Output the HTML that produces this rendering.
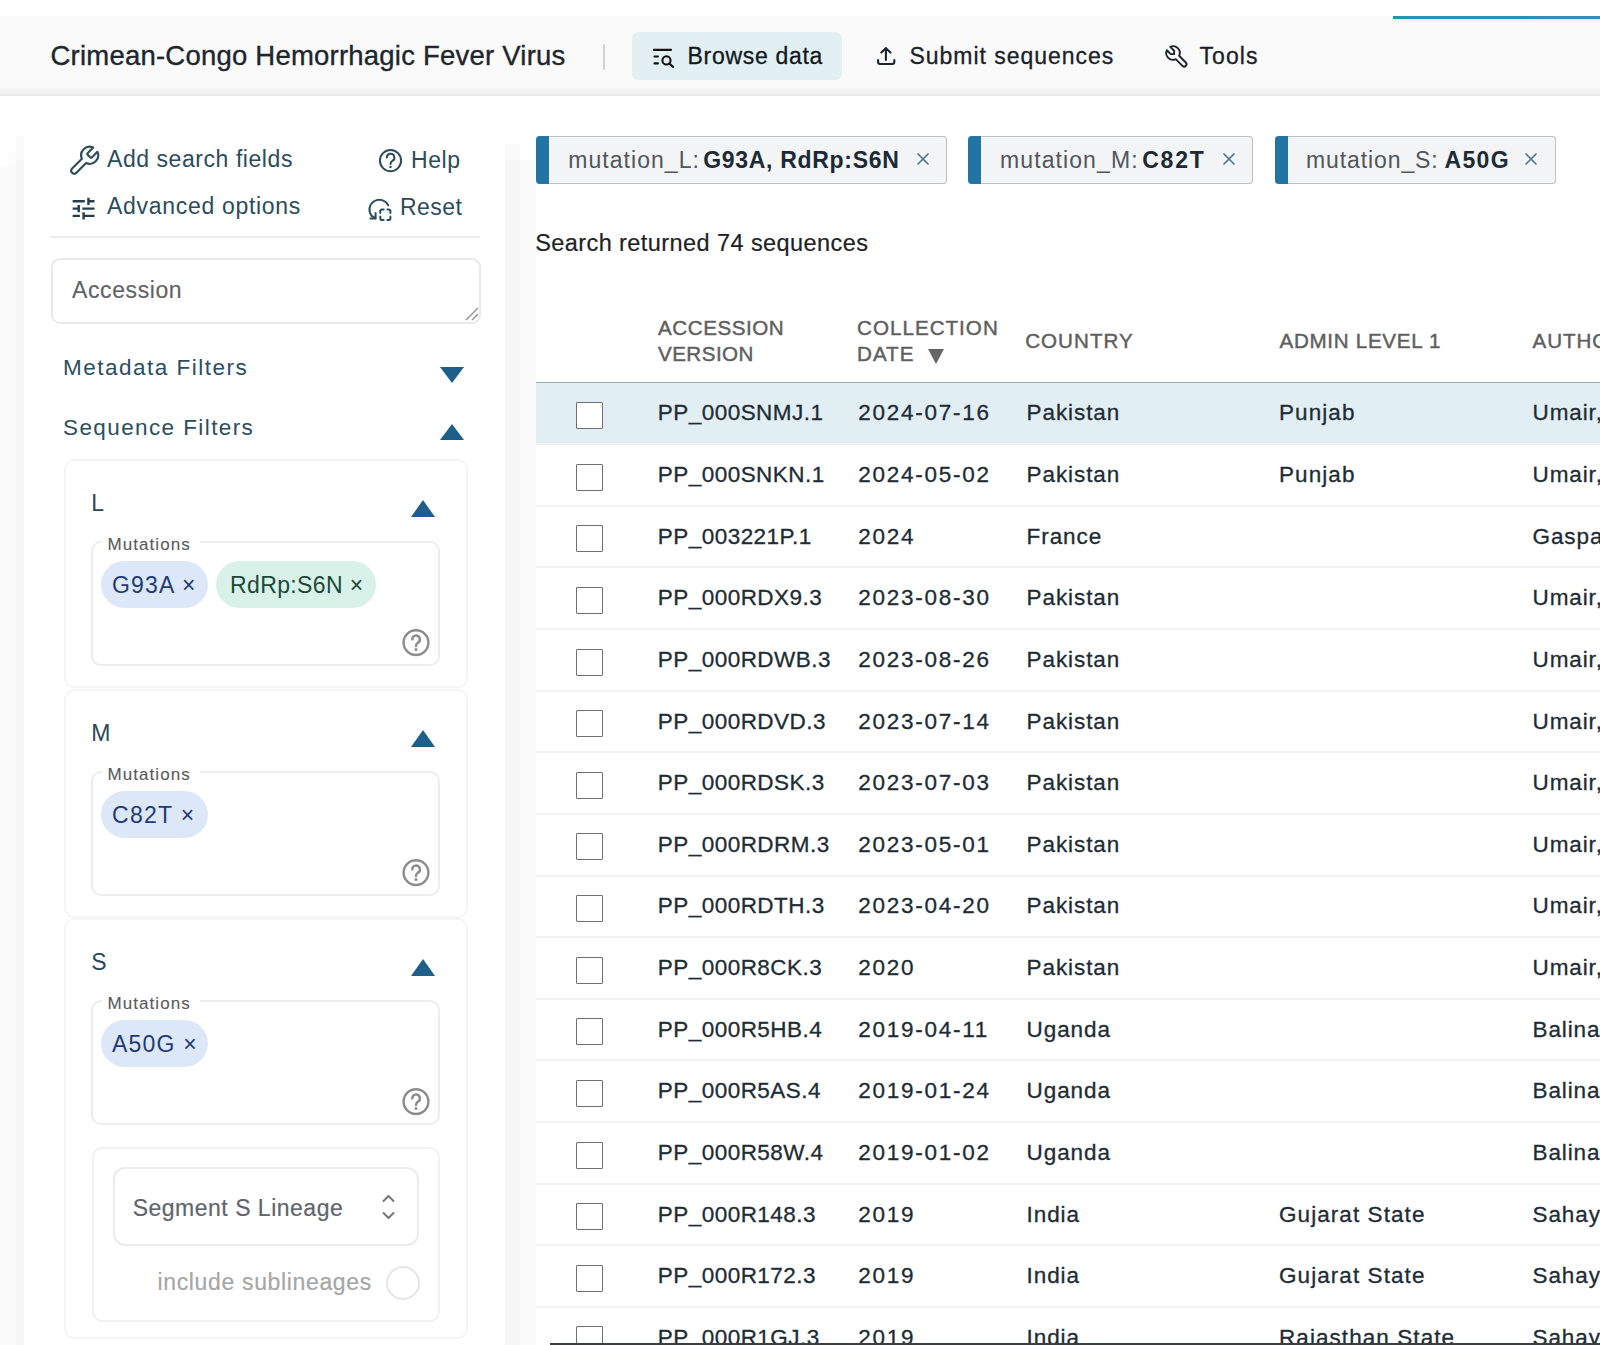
<!DOCTYPE html>
<html><head><meta charset="utf-8"><title>Browse data</title>
<style>
html,body{margin:0;padding:0;background:#fff;}
body{width:1600px;height:1345px;overflow:hidden;position:relative;font-family:"Liberation Sans",sans-serif;}
.t{position:absolute;white-space:nowrap;}
</style></head><body>
<div style="position:absolute;left:0;top:16px;width:1600px;height:72px;background:#fafafa"></div>
<div style="position:absolute;left:0;top:88px;width:1600px;height:6px;background:linear-gradient(#f6f6f6,#efefef)"></div>
<div style="position:absolute;left:0;top:94px;width:1600px;height:2px;background:#e9e9e9"></div>
<div style="position:absolute;left:1393px;top:16px;width:207px;height:3px;background:#2f8fb3"></div>
<div style="position:absolute;left:1393px;top:19px;width:207px;height:4px;background:linear-gradient(#fbe3f0,#f4fbf6)"></div>
<div class="t" style="left:50.5px;top:42.3px;font-size:27.5px;line-height:27.5px;color:#20262c;letter-spacing:0.22px;font-weight:400;-webkit-text-stroke:0.35px #20262c">Crimean-Congo Hemorrhagic Fever Virus</div>
<div style="position:absolute;left:603px;top:44px;width:2px;height:26px;background:#d2d2d2;border-radius:1px"></div>
<div style="position:absolute;left:632px;top:32px;width:210px;height:48px;background:#e2eff3;border-radius:6px"></div>
<svg style="position:absolute;left:648.4px;top:42.9px" width="28.8" height="28.8" viewBox="0 0 24 24">
<g stroke="#111" stroke-width="1.75" fill="none" stroke-linecap="round" stroke-linejoin="round">
<circle cx="15.4" cy="14.5" r="3.4"/><path d="M17.9 17.1L20.9 19.9"/><path d="M4.9 5.7h14.3"/><path d="M5.4 11.3h2.9"/><path d="M5.4 17h2.9"/>
</g></svg>
<div class="t" style="left:687.5px;top:44.9px;font-size:23px;line-height:23px;color:#111820;letter-spacing:0.7px;font-weight:400;-webkit-text-stroke:0.3px #111820">Browse data</div>
<svg style="position:absolute;left:873.5px;top:43.3px" width="24" height="24" viewBox="0 0 24 24">
<g stroke="#1d232a" stroke-width="2.1" fill="none" stroke-linecap="round" stroke-linejoin="round">
<path d="M4.1 17v2a2 2 0 0 0 2 2h12.2a2 2 0 0 0 2 -2v-2"/><path d="M7.3 9.6l4.6 -4.4l4.6 4.4"/><path d="M11.9 5.4v11.6"/>
</g></svg>
<div class="t" style="left:909.5px;top:44.9px;font-size:23px;line-height:23px;color:#1b2128;letter-spacing:0.97px;font-weight:400;-webkit-text-stroke:0.3px #1b2128">Submit sequences</div>
<svg style="position:absolute;left:1163.2px;top:43.4px" width="26.7" height="26.7" viewBox="0 0 24 24">
<g stroke="#1d232a" stroke-width="1.7" fill="none" stroke-linecap="round" stroke-linejoin="round">
<path d="M7 10h3v-3l-3.5 -3.5a6 6 0 0 1 8 8l6 6a2 2 0 0 1 -3 3l-6 -6a6 6 0 0 1 -8 -8l3.5 3.5"/>
</g></svg>
<div class="t" style="left:1199.5px;top:44.9px;font-size:23px;line-height:23px;color:#1b2128;letter-spacing:1.05px;font-weight:400;-webkit-text-stroke:0.3px #1b2128">Tools</div>
<div style="position:absolute;left:0;top:167px;width:16px;height:1178px;background:#fafafa"></div>
<div style="position:absolute;left:8px;top:152px;width:8px;height:15px;background:#fcfcfc"></div>
<div style="position:absolute;left:16px;top:136px;width:8px;height:24px;background:#fbfbfb"></div>
<div style="position:absolute;left:16px;top:160px;width:8px;height:1185px;background:#f7f7f7"></div>
<div style="position:absolute;left:505px;top:144px;width:15px;height:16px;background:#fafafa"></div>
<div style="position:absolute;left:505px;top:160px;width:15px;height:1185px;background:#f7f7f7"></div>
<div style="position:absolute;left:520px;top:160px;width:16px;height:1185px;background:#fbfbfb"></div>
<div style="position:absolute;left:24px;top:136px;width:481px;height:1209px;background:#fff"></div>
<svg style="position:absolute;left:66.8px;top:144.1px" width="34" height="34" viewBox="0 0 24 24">
<path d="M14.7 6.3a1 1 0 0 0 0 1.4l1.6 1.6a1 1 0 0 0 1.4 0l3.77-3.77a6 6 0 0 1-7.94 7.94l-6.91 6.91a2.12 2.12 0 0 1-3-3l6.91-6.91a6 6 0 0 1 7.94-7.94l-3.76 3.76z" stroke="#2e4c5a" stroke-width="1.5" fill="none" stroke-linecap="round" stroke-linejoin="round"/>
</svg>
<div class="t" style="left:107.0px;top:147.5px;font-size:23px;line-height:23px;color:#2b4c5c;letter-spacing:0.56px;font-weight:400;">Add search fields</div>
<svg style="position:absolute;left:69.3px;top:194.3px" width="29.2" height="29.2" viewBox="0 0 24 24">
<path fill="#263f4e" d="M3 17v2h6v-2H3zM3 5v2h10V5H3zm10 16v-2h8v-2h-8v-2h-2v6h2zM7 9v2H3v2h4v2h2V9H7zm14 4v-2H11v2h10zm-6-4h2V7h4V5h-4V3h-2v6z"/>
</svg>
<div class="t" style="left:107.0px;top:194.5px;font-size:23px;line-height:23px;color:#2b4c5c;letter-spacing:0.7px;font-weight:400;">Advanced options</div>
<svg style="position:absolute;left:376px;top:146px" width="30" height="30" viewBox="376 146 30 30">
<circle cx="390.5" cy="160.6" r="10.6" stroke="#2b4c5c" stroke-width="2" fill="none"/>
<path d="M386.8 157.6 A3.8 3.8 0 1 1 392.2 161 Q390.5 162 390.5 164" stroke="#2b4c5c" stroke-width="2" fill="none" stroke-linecap="round"/>
<circle cx="390.5" cy="167" r="1.2" fill="#2b4c5c"/>
</svg>
<div class="t" style="left:411.0px;top:148.5px;font-size:23px;line-height:23px;color:#2b4c5c;letter-spacing:0.6px;font-weight:400;">Help</div>
<svg style="position:absolute;left:364px;top:194px" width="32" height="32" viewBox="364 194 32 32">
<g stroke="#2b4c5c" stroke-width="2" fill="none" stroke-linecap="round" stroke-linejoin="round">
<path d="M388.3 205.4 A9.9 9.9 0 1 0 371.6 215.8 L375.4 218.2"/>
<polyline points="375.6,213 375.6,218.4 370.4,218.4"/>
<path d="M380.3 213.1 V211.4 Q380.3 209.6 382.1 209.6 H383.6 M387.4 209.6 H388.6 Q390.4 209.6 390.4 211.4 V213.1 M390.4 216.6 V218.3 Q390.4 220.1 388.6 220.1 H387.4 M383.6 220.1 H382.1 Q380.3 220.1 380.3 218.3 V216.6"/>
</g>
</svg>
<div class="t" style="left:400.0px;top:195.6px;font-size:23px;line-height:23px;color:#2b4c5c;letter-spacing:0.45px;font-weight:400;">Reset</div>
<div style="position:absolute;left:50px;top:236px;width:430px;height:2px;background:#eeeeee"></div>
<div style="position:absolute;left:51px;top:258px;width:430px;height:66px;box-sizing:border-box;border:2px solid #e9e9e9;border-radius:9px;background:#fff"></div>
<svg style="position:absolute;left:462px;top:304px" width="18" height="18" viewBox="0 0 18 18">
<g stroke="#9a9a9a" stroke-width="1.6"><line x1="4" y1="16" x2="16" y2="4"/><line x1="10" y1="16" x2="16" y2="10"/></g></svg>
<div class="t" style="left:72.0px;top:279.0px;font-size:23px;line-height:23px;color:#5f6368;letter-spacing:0.6px;font-weight:400;-webkit-text-stroke:0.15px #5f6368">Accession</div>
<div class="t" style="left:63.0px;top:356.5px;font-size:22.5px;line-height:22.5px;color:#2b4e60;letter-spacing:1.5px;font-weight:400;">Metadata Filters</div>
<div style="position:absolute;left:439.5px;top:367.4px;width:0;height:0;border-left:12.2px solid transparent;border-right:12.2px solid transparent;border-top:16.8px solid #1e5f8a"></div>
<div class="t" style="left:63.0px;top:417.3px;font-size:22.5px;line-height:22.5px;color:#2b4e60;letter-spacing:1.4px;font-weight:400;">Sequence Filters</div>
<div style="position:absolute;left:439.5px;top:424.2px;width:0;height:0;border-left:12.2px solid transparent;border-right:12.2px solid transparent;border-bottom:16.8px solid #1e5f8a"></div>
<div style="position:absolute;left:64px;top:459px;width:404px;height:229px;box-sizing:border-box;border:2px solid #f5f5f5;border-radius:10px"></div>
<div class="t" style="left:91.2px;top:491.8px;font-size:23px;line-height:23px;color:#2a475c;letter-spacing:0.3px;font-weight:400;">L</div>
<div style="position:absolute;left:411.4px;top:500px;width:0;height:0;border-left:12px solid transparent;border-right:12px solid transparent;border-bottom:17px solid #1e5f8a"></div>
<div style="position:absolute;left:91px;top:541px;width:349px;height:125px;box-sizing:border-box;border:2px solid #ededed;border-radius:10px"></div>
<div style="position:absolute;left:102px;top:537px;width:98px;height:8px;background:#fff"></div>
<div class="t" style="left:107.5px;top:536.1px;font-size:17px;line-height:17px;color:#5a5a5a;letter-spacing:1.07px;font-weight:400;-webkit-text-stroke:0.1px #5a5a5a">Mutations</div>
<div style="position:absolute;left:100.5px;top:561px;width:107px;height:47px;background:#dce8f8;border-radius:24px"></div>
<div class="t" style="left:112.0px;top:573.5px;font-size:23px;line-height:23px;color:#1f3a78;letter-spacing:1.2px;font-weight:400;">G93A ×</div>
<div style="position:absolute;left:215.5px;top:561px;width:160px;height:47px;background:#d8f2e9;border-radius:24px"></div>
<div class="t" style="left:230.0px;top:573.5px;font-size:23px;line-height:23px;color:#1b4a38;letter-spacing:0.38px;font-weight:400;">RdRp:S6N ×</div>
<svg style="position:absolute;left:400px;top:626px" width="32" height="32" viewBox="0 0 32 32">
<circle cx="16" cy="16.6" r="12.4" stroke="#8c8c8c" stroke-width="2.4" fill="none"/>
<path d="M12.3 13.4 A3.8 3.8 0 1 1 17.8 16.8 Q16 17.9 16 20" stroke="#8c8c8c" stroke-width="2.4" fill="none" stroke-linecap="round"/>
<circle cx="16" cy="23.4" r="1.5" fill="#8c8c8c"/></svg>
<div style="position:absolute;left:64px;top:689px;width:404px;height:229px;box-sizing:border-box;border:2px solid #f5f5f5;border-radius:10px"></div>
<div class="t" style="left:91.2px;top:721.8px;font-size:23px;line-height:23px;color:#2a475c;letter-spacing:0.3px;font-weight:400;">M</div>
<div style="position:absolute;left:411.4px;top:730px;width:0;height:0;border-left:12px solid transparent;border-right:12px solid transparent;border-bottom:17px solid #1e5f8a"></div>
<div style="position:absolute;left:91px;top:771px;width:349px;height:125px;box-sizing:border-box;border:2px solid #ededed;border-radius:10px"></div>
<div style="position:absolute;left:102px;top:767px;width:98px;height:8px;background:#fff"></div>
<div class="t" style="left:107.5px;top:766.1px;font-size:17px;line-height:17px;color:#5a5a5a;letter-spacing:1.07px;font-weight:400;-webkit-text-stroke:0.1px #5a5a5a">Mutations</div>
<div style="position:absolute;left:100.5px;top:791px;width:107px;height:47px;background:#dce8f8;border-radius:24px"></div>
<div class="t" style="left:112.0px;top:803.5px;font-size:23px;line-height:23px;color:#1f3a78;letter-spacing:1.3px;font-weight:400;">C82T ×</div>
<svg style="position:absolute;left:400px;top:856px" width="32" height="32" viewBox="0 0 32 32">
<circle cx="16" cy="16.6" r="12.4" stroke="#8c8c8c" stroke-width="2.4" fill="none"/>
<path d="M12.3 13.4 A3.8 3.8 0 1 1 17.8 16.8 Q16 17.9 16 20" stroke="#8c8c8c" stroke-width="2.4" fill="none" stroke-linecap="round"/>
<circle cx="16" cy="23.4" r="1.5" fill="#8c8c8c"/></svg>
<div style="position:absolute;left:64px;top:918px;width:404px;height:421px;box-sizing:border-box;border:2px solid #f5f5f5;border-radius:10px"></div>
<div class="t" style="left:91.2px;top:950.8px;font-size:23px;line-height:23px;color:#2a475c;letter-spacing:0.3px;font-weight:400;">S</div>
<div style="position:absolute;left:411.4px;top:959px;width:0;height:0;border-left:12px solid transparent;border-right:12px solid transparent;border-bottom:17px solid #1e5f8a"></div>
<div style="position:absolute;left:91px;top:1000px;width:349px;height:125px;box-sizing:border-box;border:2px solid #ededed;border-radius:10px"></div>
<div style="position:absolute;left:102px;top:996px;width:98px;height:8px;background:#fff"></div>
<div class="t" style="left:107.5px;top:995.1px;font-size:17px;line-height:17px;color:#5a5a5a;letter-spacing:1.07px;font-weight:400;-webkit-text-stroke:0.1px #5a5a5a">Mutations</div>
<div style="position:absolute;left:100.5px;top:1020px;width:107px;height:47px;background:#dce8f8;border-radius:24px"></div>
<div class="t" style="left:112.0px;top:1032.5px;font-size:23px;line-height:23px;color:#1f3a78;letter-spacing:1.2px;font-weight:400;">A50G ×</div>
<svg style="position:absolute;left:400px;top:1085px" width="32" height="32" viewBox="0 0 32 32">
<circle cx="16" cy="16.6" r="12.4" stroke="#8c8c8c" stroke-width="2.4" fill="none"/>
<path d="M12.3 13.4 A3.8 3.8 0 1 1 17.8 16.8 Q16 17.9 16 20" stroke="#8c8c8c" stroke-width="2.4" fill="none" stroke-linecap="round"/>
<circle cx="16" cy="23.4" r="1.5" fill="#8c8c8c"/></svg>
<div style="position:absolute;left:92px;top:1147px;width:348px;height:175px;box-sizing:border-box;border:2px solid #f1f1f1;border-radius:10px"></div>
<div style="position:absolute;left:112.5px;top:1167px;width:306px;height:79px;box-sizing:border-box;border:2px solid #ebebeb;border-radius:12px"></div>
<div class="t" style="left:132.7px;top:1196.8px;font-size:23px;line-height:23px;color:#60656c;letter-spacing:0.5px;font-weight:400;-webkit-text-stroke:0.2px #60656c">Segment S Lineage</div>
<svg style="position:absolute;left:378px;top:1192px" width="22" height="30" viewBox="0 0 22 30">
<g stroke="#777" stroke-width="2" fill="none" stroke-linecap="round" stroke-linejoin="round">
<polyline points="5.5,9 10.5,4 15.5,9"/><polyline points="5.5,21 10.5,26 15.5,21"/></g></svg>
<div class="t" style="left:157.5px;top:1270.5px;font-size:23px;line-height:23px;color:#a6a6a6;letter-spacing:0.65px;font-weight:400;-webkit-text-stroke:0.2px #a6a6a6">include sublineages</div>
<div style="position:absolute;left:385.5px;top:1266px;width:34px;height:34px;box-sizing:border-box;border:2px solid #e6e6e6;border-radius:50%"></div>
<div style="position:absolute;left:536px;top:136px;width:411px;height:48px;box-sizing:border-box;border:1.5px solid #bfbfbf;border-left:none;border-radius:4px;background:#f3f4f5"></div>
<div style="position:absolute;left:536px;top:136px;width:13px;height:48px;background:#2274a5;border-radius:4px 0 0 4px"></div>
<div class="t" style="left:568.3px;top:148.5px;font-size:23px;line-height:23px;color:#50565c;letter-spacing:1.04px;font-weight:400;">mutation_L:</div>
<div class="t" style="left:703.2px;top:148.5px;font-size:23px;line-height:23px;color:#1c2a36;letter-spacing:0.7px;font-weight:700;">G93A, RdRp:S6N</div>
<svg style="position:absolute;left:915px;top:151px" width="16" height="16" viewBox="0 0 16 16">
<g stroke="#4f7898" stroke-width="1.7" stroke-linecap="round"><line x1="3" y1="3" x2="13" y2="13"/><line x1="13" y1="3" x2="3" y2="13"/></g></svg>
<div style="position:absolute;left:968px;top:136px;width:285px;height:48px;box-sizing:border-box;border:1.5px solid #bfbfbf;border-left:none;border-radius:4px;background:#f3f4f5"></div>
<div style="position:absolute;left:968px;top:136px;width:13px;height:48px;background:#2274a5;border-radius:4px 0 0 4px"></div>
<div class="t" style="left:1000.0px;top:148.5px;font-size:23px;line-height:23px;color:#50565c;letter-spacing:1.1px;font-weight:400;">mutation_M:</div>
<div class="t" style="left:1142.2px;top:148.5px;font-size:23px;line-height:23px;color:#1c2a36;letter-spacing:1.77px;font-weight:700;">C82T</div>
<svg style="position:absolute;left:1221px;top:151px" width="16" height="16" viewBox="0 0 16 16">
<g stroke="#4f7898" stroke-width="1.7" stroke-linecap="round"><line x1="3" y1="3" x2="13" y2="13"/><line x1="13" y1="3" x2="3" y2="13"/></g></svg>
<div style="position:absolute;left:1275px;top:136px;width:281px;height:48px;box-sizing:border-box;border:1.5px solid #bfbfbf;border-left:none;border-radius:4px;background:#f3f4f5"></div>
<div style="position:absolute;left:1275px;top:136px;width:13px;height:48px;background:#2274a5;border-radius:4px 0 0 4px"></div>
<div class="t" style="left:1306.0px;top:148.5px;font-size:23px;line-height:23px;color:#50565c;letter-spacing:0.9px;font-weight:400;">mutation_S:</div>
<div class="t" style="left:1444.6px;top:148.5px;font-size:23px;line-height:23px;color:#1c2a36;letter-spacing:1.3px;font-weight:700;">A50G</div>
<svg style="position:absolute;left:1523px;top:151px" width="16" height="16" viewBox="0 0 16 16">
<g stroke="#4f7898" stroke-width="1.7" stroke-linecap="round"><line x1="3" y1="3" x2="13" y2="13"/><line x1="13" y1="3" x2="3" y2="13"/></g></svg>
<div class="t" style="left:535.2px;top:231.8px;font-size:23.5px;line-height:23.5px;color:#1e2226;letter-spacing:0.42px;font-weight:400;-webkit-text-stroke:0.2px #1e2226">Search returned 74 sequences</div>
<div class="t" style="left:658.0px;top:317.5px;font-size:20.6px;line-height:20.6px;color:#5f5f5f;letter-spacing:0.55px;font-weight:400;-webkit-text-stroke:0.45px #5f5f5f">ACCESSION</div>
<div class="t" style="left:658.0px;top:344.4px;font-size:20.6px;line-height:20.6px;color:#5f5f5f;letter-spacing:0.45px;font-weight:400;-webkit-text-stroke:0.45px #5f5f5f">VERSION</div>
<div class="t" style="left:857.0px;top:317.5px;font-size:20.6px;line-height:20.6px;color:#5f5f5f;letter-spacing:1.02px;font-weight:400;-webkit-text-stroke:0.45px #5f5f5f">COLLECTION</div>
<div class="t" style="left:857.0px;top:344.4px;font-size:20.6px;line-height:20.6px;color:#5f5f5f;letter-spacing:1.02px;font-weight:400;-webkit-text-stroke:0.45px #5f5f5f">DATE</div>
<div style="position:absolute;left:928px;top:349px;width:0;height:0;border-left:8.7px solid transparent;border-right:8.7px solid transparent;border-top:15.7px solid #666"></div>
<div class="t" style="left:1025.2px;top:330.7px;font-size:20.6px;line-height:20.6px;color:#5f5f5f;letter-spacing:1.02px;font-weight:400;-webkit-text-stroke:0.45px #5f5f5f">COUNTRY</div>
<div class="t" style="left:1279.5px;top:330.7px;font-size:20.6px;line-height:20.6px;color:#5f5f5f;letter-spacing:0.7px;font-weight:400;-webkit-text-stroke:0.45px #5f5f5f">ADMIN LEVEL 1</div>
<div class="t" style="left:1532.5px;top:330.7px;font-size:20.6px;line-height:20.6px;color:#5f5f5f;letter-spacing:0.92px;font-weight:400;-webkit-text-stroke:0.45px #5f5f5f">AUTHORS</div>
<div style="position:absolute;left:536px;top:381.5px;width:1064px;height:1.5px;background:#a6a6a6"></div>
<div style="position:absolute;left:536px;top:383.00px;width:1064px;height:61.63px;background:#e1eff5"></div>
<div style="position:absolute;left:576px;top:402.00px;width:27px;height:27px;box-sizing:border-box;border:1.5px solid #707070;border-radius:1px;background:#fff"></div>
<div class="t" style="left:657.8px;top:402.4px;font-size:22.5px;line-height:22.5px;color:#1e2c35;letter-spacing:0.46px;font-weight:400;-webkit-text-stroke:0.3px #1e2c35">PP_000SNMJ.1</div>
<div class="t" style="left:858.3px;top:402.4px;font-size:22.5px;line-height:22.5px;color:#1e2c35;letter-spacing:1.73px;font-weight:400;-webkit-text-stroke:0.3px #1e2c35">2024-07-16</div>
<div class="t" style="left:1026.6px;top:402.4px;font-size:22.5px;line-height:22.5px;color:#1e2c35;letter-spacing:0.91px;font-weight:400;-webkit-text-stroke:0.3px #1e2c35">Pakistan</div>
<div class="t" style="left:1279.0px;top:402.4px;font-size:22.5px;line-height:22.5px;color:#1e2c35;letter-spacing:1.07px;font-weight:400;-webkit-text-stroke:0.3px #1e2c35">Punjab</div>
<div class="t" style="left:1532.5px;top:402.4px;font-size:22.5px;line-height:22.5px;color:#1e2c35;letter-spacing:0.9px;font-weight:400;-webkit-text-stroke:0.3px #1e2c35">Umair, M</div>
<div style="position:absolute;left:536px;top:443.13px;width:1064px;height:2px;background:#f1f1f1"></div>
<div style="position:absolute;left:576px;top:463.63px;width:27px;height:27px;box-sizing:border-box;border:1.5px solid #707070;border-radius:1px;background:#fff"></div>
<div class="t" style="left:657.8px;top:464.0px;font-size:22.5px;line-height:22.5px;color:#1e2c35;letter-spacing:0.46px;font-weight:400;-webkit-text-stroke:0.3px #1e2c35">PP_000SNKN.1</div>
<div class="t" style="left:858.3px;top:464.0px;font-size:22.5px;line-height:22.5px;color:#1e2c35;letter-spacing:1.73px;font-weight:400;-webkit-text-stroke:0.3px #1e2c35">2024-05-02</div>
<div class="t" style="left:1026.6px;top:464.0px;font-size:22.5px;line-height:22.5px;color:#1e2c35;letter-spacing:0.91px;font-weight:400;-webkit-text-stroke:0.3px #1e2c35">Pakistan</div>
<div class="t" style="left:1279.0px;top:464.0px;font-size:22.5px;line-height:22.5px;color:#1e2c35;letter-spacing:1.07px;font-weight:400;-webkit-text-stroke:0.3px #1e2c35">Punjab</div>
<div class="t" style="left:1532.5px;top:464.0px;font-size:22.5px;line-height:22.5px;color:#1e2c35;letter-spacing:0.9px;font-weight:400;-webkit-text-stroke:0.3px #1e2c35">Umair, M</div>
<div style="position:absolute;left:536px;top:504.76px;width:1064px;height:2px;background:#f1f1f1"></div>
<div style="position:absolute;left:576px;top:525.26px;width:27px;height:27px;box-sizing:border-box;border:1.5px solid #707070;border-radius:1px;background:#fff"></div>
<div class="t" style="left:657.8px;top:525.6px;font-size:22.5px;line-height:22.5px;color:#1e2c35;letter-spacing:0.46px;font-weight:400;-webkit-text-stroke:0.3px #1e2c35">PP_003221P.1</div>
<div class="t" style="left:858.3px;top:525.6px;font-size:22.5px;line-height:22.5px;color:#1e2c35;letter-spacing:1.73px;font-weight:400;-webkit-text-stroke:0.3px #1e2c35">2024</div>
<div class="t" style="left:1026.6px;top:525.6px;font-size:22.5px;line-height:22.5px;color:#1e2c35;letter-spacing:0.91px;font-weight:400;-webkit-text-stroke:0.3px #1e2c35">France</div>
<div class="t" style="left:1532.5px;top:525.6px;font-size:22.5px;line-height:22.5px;color:#1e2c35;letter-spacing:0.9px;font-weight:400;-webkit-text-stroke:0.3px #1e2c35">Gaspard</div>
<div style="position:absolute;left:536px;top:566.39px;width:1064px;height:2px;background:#f1f1f1"></div>
<div style="position:absolute;left:576px;top:586.89px;width:27px;height:27px;box-sizing:border-box;border:1.5px solid #707070;border-radius:1px;background:#fff"></div>
<div class="t" style="left:657.8px;top:587.2px;font-size:22.5px;line-height:22.5px;color:#1e2c35;letter-spacing:0.46px;font-weight:400;-webkit-text-stroke:0.3px #1e2c35">PP_000RDX9.3</div>
<div class="t" style="left:858.3px;top:587.2px;font-size:22.5px;line-height:22.5px;color:#1e2c35;letter-spacing:1.73px;font-weight:400;-webkit-text-stroke:0.3px #1e2c35">2023-08-30</div>
<div class="t" style="left:1026.6px;top:587.2px;font-size:22.5px;line-height:22.5px;color:#1e2c35;letter-spacing:0.91px;font-weight:400;-webkit-text-stroke:0.3px #1e2c35">Pakistan</div>
<div class="t" style="left:1532.5px;top:587.2px;font-size:22.5px;line-height:22.5px;color:#1e2c35;letter-spacing:0.9px;font-weight:400;-webkit-text-stroke:0.3px #1e2c35">Umair, M</div>
<div style="position:absolute;left:536px;top:628.02px;width:1064px;height:2px;background:#f1f1f1"></div>
<div style="position:absolute;left:576px;top:648.52px;width:27px;height:27px;box-sizing:border-box;border:1.5px solid #707070;border-radius:1px;background:#fff"></div>
<div class="t" style="left:657.8px;top:648.9px;font-size:22.5px;line-height:22.5px;color:#1e2c35;letter-spacing:0.46px;font-weight:400;-webkit-text-stroke:0.3px #1e2c35">PP_000RDWB.3</div>
<div class="t" style="left:858.3px;top:648.9px;font-size:22.5px;line-height:22.5px;color:#1e2c35;letter-spacing:1.73px;font-weight:400;-webkit-text-stroke:0.3px #1e2c35">2023-08-26</div>
<div class="t" style="left:1026.6px;top:648.9px;font-size:22.5px;line-height:22.5px;color:#1e2c35;letter-spacing:0.91px;font-weight:400;-webkit-text-stroke:0.3px #1e2c35">Pakistan</div>
<div class="t" style="left:1532.5px;top:648.9px;font-size:22.5px;line-height:22.5px;color:#1e2c35;letter-spacing:0.9px;font-weight:400;-webkit-text-stroke:0.3px #1e2c35">Umair, M</div>
<div style="position:absolute;left:536px;top:689.65px;width:1064px;height:2px;background:#f1f1f1"></div>
<div style="position:absolute;left:576px;top:710.15px;width:27px;height:27px;box-sizing:border-box;border:1.5px solid #707070;border-radius:1px;background:#fff"></div>
<div class="t" style="left:657.8px;top:710.5px;font-size:22.5px;line-height:22.5px;color:#1e2c35;letter-spacing:0.46px;font-weight:400;-webkit-text-stroke:0.3px #1e2c35">PP_000RDVD.3</div>
<div class="t" style="left:858.3px;top:710.5px;font-size:22.5px;line-height:22.5px;color:#1e2c35;letter-spacing:1.73px;font-weight:400;-webkit-text-stroke:0.3px #1e2c35">2023-07-14</div>
<div class="t" style="left:1026.6px;top:710.5px;font-size:22.5px;line-height:22.5px;color:#1e2c35;letter-spacing:0.91px;font-weight:400;-webkit-text-stroke:0.3px #1e2c35">Pakistan</div>
<div class="t" style="left:1532.5px;top:710.5px;font-size:22.5px;line-height:22.5px;color:#1e2c35;letter-spacing:0.9px;font-weight:400;-webkit-text-stroke:0.3px #1e2c35">Umair, M</div>
<div style="position:absolute;left:536px;top:751.28px;width:1064px;height:2px;background:#f1f1f1"></div>
<div style="position:absolute;left:576px;top:771.78px;width:27px;height:27px;box-sizing:border-box;border:1.5px solid #707070;border-radius:1px;background:#fff"></div>
<div class="t" style="left:657.8px;top:772.1px;font-size:22.5px;line-height:22.5px;color:#1e2c35;letter-spacing:0.46px;font-weight:400;-webkit-text-stroke:0.3px #1e2c35">PP_000RDSK.3</div>
<div class="t" style="left:858.3px;top:772.1px;font-size:22.5px;line-height:22.5px;color:#1e2c35;letter-spacing:1.73px;font-weight:400;-webkit-text-stroke:0.3px #1e2c35">2023-07-03</div>
<div class="t" style="left:1026.6px;top:772.1px;font-size:22.5px;line-height:22.5px;color:#1e2c35;letter-spacing:0.91px;font-weight:400;-webkit-text-stroke:0.3px #1e2c35">Pakistan</div>
<div class="t" style="left:1532.5px;top:772.1px;font-size:22.5px;line-height:22.5px;color:#1e2c35;letter-spacing:0.9px;font-weight:400;-webkit-text-stroke:0.3px #1e2c35">Umair, M</div>
<div style="position:absolute;left:536px;top:812.91px;width:1064px;height:2px;background:#f1f1f1"></div>
<div style="position:absolute;left:576px;top:833.41px;width:27px;height:27px;box-sizing:border-box;border:1.5px solid #707070;border-radius:1px;background:#fff"></div>
<div class="t" style="left:657.8px;top:833.8px;font-size:22.5px;line-height:22.5px;color:#1e2c35;letter-spacing:0.46px;font-weight:400;-webkit-text-stroke:0.3px #1e2c35">PP_000RDRM.3</div>
<div class="t" style="left:858.3px;top:833.8px;font-size:22.5px;line-height:22.5px;color:#1e2c35;letter-spacing:1.73px;font-weight:400;-webkit-text-stroke:0.3px #1e2c35">2023-05-01</div>
<div class="t" style="left:1026.6px;top:833.8px;font-size:22.5px;line-height:22.5px;color:#1e2c35;letter-spacing:0.91px;font-weight:400;-webkit-text-stroke:0.3px #1e2c35">Pakistan</div>
<div class="t" style="left:1532.5px;top:833.8px;font-size:22.5px;line-height:22.5px;color:#1e2c35;letter-spacing:0.9px;font-weight:400;-webkit-text-stroke:0.3px #1e2c35">Umair, M</div>
<div style="position:absolute;left:536px;top:874.54px;width:1064px;height:2px;background:#f1f1f1"></div>
<div style="position:absolute;left:576px;top:895.04px;width:27px;height:27px;box-sizing:border-box;border:1.5px solid #707070;border-radius:1px;background:#fff"></div>
<div class="t" style="left:657.8px;top:895.4px;font-size:22.5px;line-height:22.5px;color:#1e2c35;letter-spacing:0.46px;font-weight:400;-webkit-text-stroke:0.3px #1e2c35">PP_000RDTH.3</div>
<div class="t" style="left:858.3px;top:895.4px;font-size:22.5px;line-height:22.5px;color:#1e2c35;letter-spacing:1.73px;font-weight:400;-webkit-text-stroke:0.3px #1e2c35">2023-04-20</div>
<div class="t" style="left:1026.6px;top:895.4px;font-size:22.5px;line-height:22.5px;color:#1e2c35;letter-spacing:0.91px;font-weight:400;-webkit-text-stroke:0.3px #1e2c35">Pakistan</div>
<div class="t" style="left:1532.5px;top:895.4px;font-size:22.5px;line-height:22.5px;color:#1e2c35;letter-spacing:0.9px;font-weight:400;-webkit-text-stroke:0.3px #1e2c35">Umair, M</div>
<div style="position:absolute;left:536px;top:936.17px;width:1064px;height:2px;background:#f1f1f1"></div>
<div style="position:absolute;left:576px;top:956.67px;width:27px;height:27px;box-sizing:border-box;border:1.5px solid #707070;border-radius:1px;background:#fff"></div>
<div class="t" style="left:657.8px;top:957.0px;font-size:22.5px;line-height:22.5px;color:#1e2c35;letter-spacing:0.46px;font-weight:400;-webkit-text-stroke:0.3px #1e2c35">PP_000R8CK.3</div>
<div class="t" style="left:858.3px;top:957.0px;font-size:22.5px;line-height:22.5px;color:#1e2c35;letter-spacing:1.73px;font-weight:400;-webkit-text-stroke:0.3px #1e2c35">2020</div>
<div class="t" style="left:1026.6px;top:957.0px;font-size:22.5px;line-height:22.5px;color:#1e2c35;letter-spacing:0.91px;font-weight:400;-webkit-text-stroke:0.3px #1e2c35">Pakistan</div>
<div class="t" style="left:1532.5px;top:957.0px;font-size:22.5px;line-height:22.5px;color:#1e2c35;letter-spacing:0.9px;font-weight:400;-webkit-text-stroke:0.3px #1e2c35">Umair, M</div>
<div style="position:absolute;left:536px;top:997.80px;width:1064px;height:2px;background:#f1f1f1"></div>
<div style="position:absolute;left:576px;top:1018.30px;width:27px;height:27px;box-sizing:border-box;border:1.5px solid #707070;border-radius:1px;background:#fff"></div>
<div class="t" style="left:657.8px;top:1018.7px;font-size:22.5px;line-height:22.5px;color:#1e2c35;letter-spacing:0.46px;font-weight:400;-webkit-text-stroke:0.3px #1e2c35">PP_000R5HB.4</div>
<div class="t" style="left:858.3px;top:1018.7px;font-size:22.5px;line-height:22.5px;color:#1e2c35;letter-spacing:1.73px;font-weight:400;-webkit-text-stroke:0.3px #1e2c35">2019-04-11</div>
<div class="t" style="left:1026.6px;top:1018.7px;font-size:22.5px;line-height:22.5px;color:#1e2c35;letter-spacing:0.91px;font-weight:400;-webkit-text-stroke:0.3px #1e2c35">Uganda</div>
<div class="t" style="left:1532.5px;top:1018.7px;font-size:22.5px;line-height:22.5px;color:#1e2c35;letter-spacing:0.9px;font-weight:400;-webkit-text-stroke:0.3px #1e2c35">Balinandi</div>
<div style="position:absolute;left:536px;top:1059.43px;width:1064px;height:2px;background:#f1f1f1"></div>
<div style="position:absolute;left:576px;top:1079.93px;width:27px;height:27px;box-sizing:border-box;border:1.5px solid #707070;border-radius:1px;background:#fff"></div>
<div class="t" style="left:657.8px;top:1080.3px;font-size:22.5px;line-height:22.5px;color:#1e2c35;letter-spacing:0.46px;font-weight:400;-webkit-text-stroke:0.3px #1e2c35">PP_000R5AS.4</div>
<div class="t" style="left:858.3px;top:1080.3px;font-size:22.5px;line-height:22.5px;color:#1e2c35;letter-spacing:1.73px;font-weight:400;-webkit-text-stroke:0.3px #1e2c35">2019-01-24</div>
<div class="t" style="left:1026.6px;top:1080.3px;font-size:22.5px;line-height:22.5px;color:#1e2c35;letter-spacing:0.91px;font-weight:400;-webkit-text-stroke:0.3px #1e2c35">Uganda</div>
<div class="t" style="left:1532.5px;top:1080.3px;font-size:22.5px;line-height:22.5px;color:#1e2c35;letter-spacing:0.9px;font-weight:400;-webkit-text-stroke:0.3px #1e2c35">Balinandi</div>
<div style="position:absolute;left:536px;top:1121.06px;width:1064px;height:2px;background:#f1f1f1"></div>
<div style="position:absolute;left:576px;top:1141.56px;width:27px;height:27px;box-sizing:border-box;border:1.5px solid #707070;border-radius:1px;background:#fff"></div>
<div class="t" style="left:657.8px;top:1141.9px;font-size:22.5px;line-height:22.5px;color:#1e2c35;letter-spacing:0.46px;font-weight:400;-webkit-text-stroke:0.3px #1e2c35">PP_000R58W.4</div>
<div class="t" style="left:858.3px;top:1141.9px;font-size:22.5px;line-height:22.5px;color:#1e2c35;letter-spacing:1.73px;font-weight:400;-webkit-text-stroke:0.3px #1e2c35">2019-01-02</div>
<div class="t" style="left:1026.6px;top:1141.9px;font-size:22.5px;line-height:22.5px;color:#1e2c35;letter-spacing:0.91px;font-weight:400;-webkit-text-stroke:0.3px #1e2c35">Uganda</div>
<div class="t" style="left:1532.5px;top:1141.9px;font-size:22.5px;line-height:22.5px;color:#1e2c35;letter-spacing:0.9px;font-weight:400;-webkit-text-stroke:0.3px #1e2c35">Balinandi</div>
<div style="position:absolute;left:536px;top:1182.69px;width:1064px;height:2px;background:#f1f1f1"></div>
<div style="position:absolute;left:576px;top:1203.19px;width:27px;height:27px;box-sizing:border-box;border:1.5px solid #707070;border-radius:1px;background:#fff"></div>
<div class="t" style="left:657.8px;top:1203.5px;font-size:22.5px;line-height:22.5px;color:#1e2c35;letter-spacing:0.46px;font-weight:400;-webkit-text-stroke:0.3px #1e2c35">PP_000R148.3</div>
<div class="t" style="left:858.3px;top:1203.5px;font-size:22.5px;line-height:22.5px;color:#1e2c35;letter-spacing:1.73px;font-weight:400;-webkit-text-stroke:0.3px #1e2c35">2019</div>
<div class="t" style="left:1026.6px;top:1203.5px;font-size:22.5px;line-height:22.5px;color:#1e2c35;letter-spacing:0.91px;font-weight:400;-webkit-text-stroke:0.3px #1e2c35">India</div>
<div class="t" style="left:1279.0px;top:1203.5px;font-size:22.5px;line-height:22.5px;color:#1e2c35;letter-spacing:1.07px;font-weight:400;-webkit-text-stroke:0.3px #1e2c35">Gujarat State</div>
<div class="t" style="left:1532.5px;top:1203.5px;font-size:22.5px;line-height:22.5px;color:#1e2c35;letter-spacing:0.9px;font-weight:400;-webkit-text-stroke:0.3px #1e2c35">Sahay, R</div>
<div style="position:absolute;left:536px;top:1244.32px;width:1064px;height:2px;background:#f1f1f1"></div>
<div style="position:absolute;left:576px;top:1264.82px;width:27px;height:27px;box-sizing:border-box;border:1.5px solid #707070;border-radius:1px;background:#fff"></div>
<div class="t" style="left:657.8px;top:1265.2px;font-size:22.5px;line-height:22.5px;color:#1e2c35;letter-spacing:0.46px;font-weight:400;-webkit-text-stroke:0.3px #1e2c35">PP_000R172.3</div>
<div class="t" style="left:858.3px;top:1265.2px;font-size:22.5px;line-height:22.5px;color:#1e2c35;letter-spacing:1.73px;font-weight:400;-webkit-text-stroke:0.3px #1e2c35">2019</div>
<div class="t" style="left:1026.6px;top:1265.2px;font-size:22.5px;line-height:22.5px;color:#1e2c35;letter-spacing:0.91px;font-weight:400;-webkit-text-stroke:0.3px #1e2c35">India</div>
<div class="t" style="left:1279.0px;top:1265.2px;font-size:22.5px;line-height:22.5px;color:#1e2c35;letter-spacing:1.07px;font-weight:400;-webkit-text-stroke:0.3px #1e2c35">Gujarat State</div>
<div class="t" style="left:1532.5px;top:1265.2px;font-size:22.5px;line-height:22.5px;color:#1e2c35;letter-spacing:0.9px;font-weight:400;-webkit-text-stroke:0.3px #1e2c35">Sahay, R</div>
<div style="position:absolute;left:536px;top:1305.95px;width:1064px;height:2px;background:#f1f1f1"></div>
<div style="position:absolute;left:576px;top:1326.45px;width:27px;height:27px;box-sizing:border-box;border:1.5px solid #707070;border-radius:1px;background:#fff"></div>
<div class="t" style="left:657.8px;top:1326.8px;font-size:22.5px;line-height:22.5px;color:#1e2c35;letter-spacing:0.46px;font-weight:400;-webkit-text-stroke:0.3px #1e2c35">PP_000R1GJ.3</div>
<div class="t" style="left:858.3px;top:1326.8px;font-size:22.5px;line-height:22.5px;color:#1e2c35;letter-spacing:1.73px;font-weight:400;-webkit-text-stroke:0.3px #1e2c35">2019</div>
<div class="t" style="left:1026.6px;top:1326.8px;font-size:22.5px;line-height:22.5px;color:#1e2c35;letter-spacing:0.91px;font-weight:400;-webkit-text-stroke:0.3px #1e2c35">India</div>
<div class="t" style="left:1279.0px;top:1326.8px;font-size:22.5px;line-height:22.5px;color:#1e2c35;letter-spacing:1.07px;font-weight:400;-webkit-text-stroke:0.3px #1e2c35">Rajasthan State</div>
<div class="t" style="left:1532.5px;top:1326.8px;font-size:22.5px;line-height:22.5px;color:#1e2c35;letter-spacing:0.9px;font-weight:400;-webkit-text-stroke:0.3px #1e2c35">Sahay, R</div>
<div style="position:absolute;left:550px;top:1343px;width:1050px;height:2px;background:#3a3f44"></div>
</body></html>
